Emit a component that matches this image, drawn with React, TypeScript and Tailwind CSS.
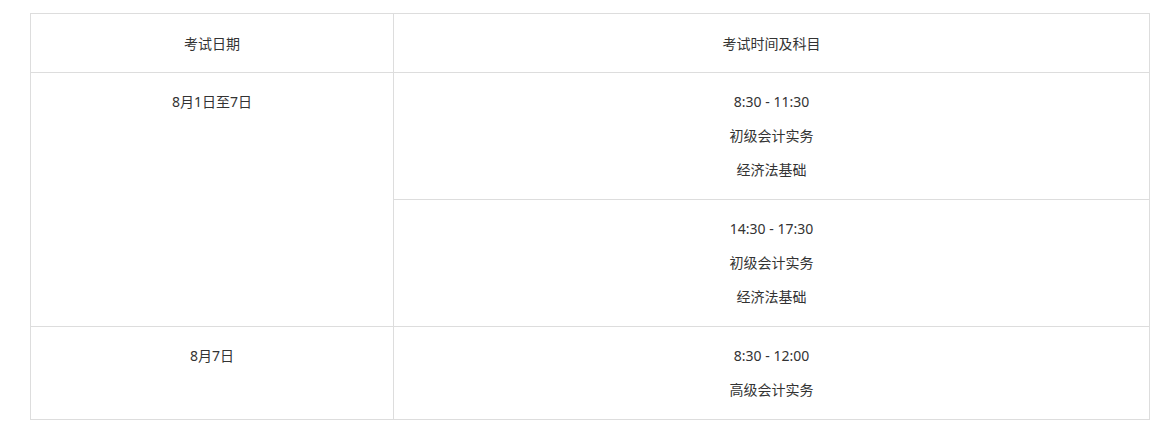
import React from "react";

interface Slot {
  time: string;
  subjects: string[];
}

interface ExamRow {
  date: string;
  slots: Slot[];
}

const rows: ExamRow[] = [
  {
    date: "8月1日至7日",
    slots: [
      { time: "8:30 - 11:30", subjects: ["初级会计实务", "经济法基础"] },
      { time: "14:30 - 17:30", subjects: ["初级会计实务", "经济法基础"] },
    ],
  },
  {
    date: "8月7日",
    slots: [{ time: "8:30 - 12:00", subjects: ["高级会计实务"] }],
  },
];

const cell = "border border-[#dddddd] text-center align-top pt-[12px] pb-[12px]";

const App: React.FC = () => {
  return (
    <div
      className="bg-white min-h-screen pt-[13px] pl-[30px] text-[14px] text-[#333333]"
      style={{ fontFamily: '"Noto Sans", "Noto Sans CJK SC", sans-serif' }}
    >
      <table className="w-[1120px] table-fixed border-collapse">
        <colgroup>
          <col className="w-[363px]" />
          <col />
        </colgroup>
        <thead>
          <tr className="h-[59px]">
            <th className="border border-[#dddddd] font-normal text-center align-middle">
              考试日期
            </th>
            <th className="border border-[#dddddd] font-normal text-center align-middle">
              考试时间及科目
            </th>
          </tr>
        </thead>
        <tbody>
          {rows.map((row) =>
            row.slots.map((slot, i) => (
              <tr key={row.date + i}>
                {i === 0 && (
                  <td className={cell} rowSpan={row.slots.length}>
                    <div className="leading-[34px]">{row.date}</div>
                  </td>
                )}
                <td className={cell}>
                  <div className="leading-[34px]">{slot.time}</div>
                  {slot.subjects.map((s) => (
                    <div key={s} className="leading-[34px]">
                      {s}
                    </div>
                  ))}
                </td>
              </tr>
            ))
          )}
        </tbody>
      </table>
    </div>
  );
};

export default App;
